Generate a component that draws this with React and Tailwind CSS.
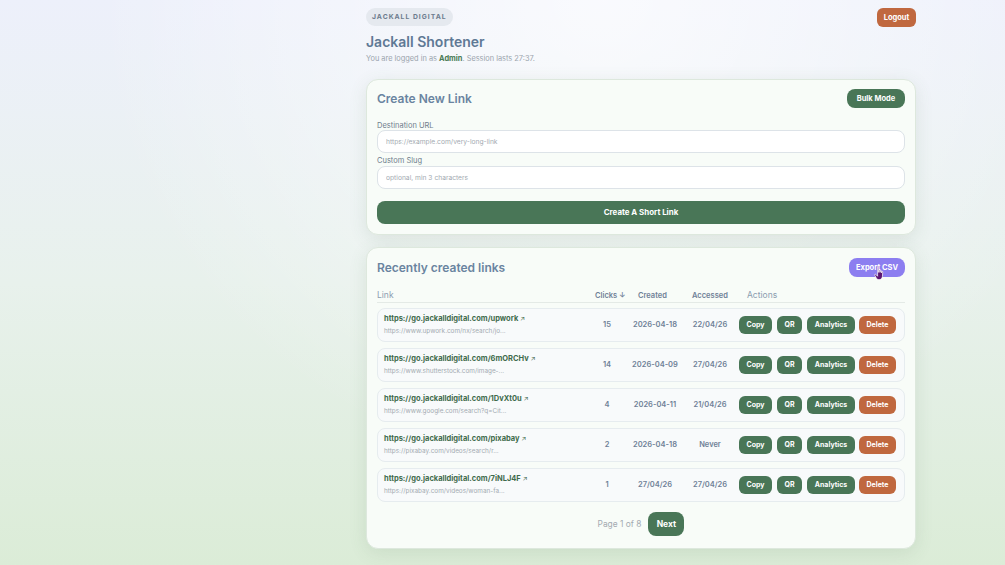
import React from 'react';

const links = [
    { short: 'https://go.jackalldigital.com/upwork', long: 'https://www.upwork.com/nx/search/jo...', clicks: 15, created: '2026-04-18', accessed: '22/04/26' },
    { short: 'https://go.jackalldigital.com/6mORCHv', long: 'https://www.shutterstock.com/image-...', clicks: 14, created: '2026-04-09', accessed: '27/04/26' },
    { short: 'https://go.jackalldigital.com/1DvXt0u', long: 'https://www.google.com/search?q=Cit...', clicks: 4, created: '2026-04-11', accessed: '21/04/26' },
    { short: 'https://go.jackalldigital.com/pixabay', long: 'https://pixabay.com/videos/search/r...', clicks: 2, created: '2026-04-18', accessed: 'Never' },
    { short: 'https://go.jackalldigital.com/7iNLJ4F', long: 'https://pixabay.com/videos/woman-fa...', clicks: 1, created: '27/04/26', accessed: '27/04/26' },
];

function LinkRow({ link }) {
    return (
        <div className="flex items-center h-[34px] rounded-lg border border-[#e6ecef] bg-[#f8fafb] pl-[6px]">
            <div className="w-[205px] flex flex-col gap-[3px] min-w-0">
                <div className="text-[7.5px] font-bold text-[#3f6b4c] leading-[10px] whitespace-nowrap">
                    {link.short} <span className="text-[6.5px] font-normal">↗</span>
                </div>
                <div className="text-[6.4px] text-[#a4abb2] leading-[9px] whitespace-nowrap">{link.long}</div>
            </div>
            <div className="w-[36px] text-center text-[7.5px] font-semibold text-[#6f8197]">{link.clicks}</div>
            <div className="w-[60px] text-center text-[7.5px] font-semibold text-[#6f8197]">{link.created}</div>
            <div className="w-[50px] text-center text-[7.5px] font-semibold text-[#6f8197]">{link.accessed}</div>
            <div className="flex items-center gap-[5px] pl-[4px]">
                <button className="h-[18px] w-[33px] rounded-md bg-[#497657] text-white text-[7px] font-bold">Copy</button>
                <button className="h-[18px] w-[25px] rounded-md bg-[#497657] text-white text-[7px] font-bold">QR</button>
                <button className="h-[18px] w-[48px] rounded-md bg-[#497657] text-white text-[7px] font-bold">Analytics</button>
                <button className="h-[18px] w-[37px] rounded-md bg-[#c0683f] text-white text-[7px] font-bold ml-[-1px]">Delete</button>
            </div>
        </div>
    );
}

// cursor de mão sobre o botão Export CSV
function HandCursor() {
    return (
        <svg width="12" height="16" viewBox="0 0 10 13" className="absolute left-[25px] top-[7px]">
            <path
                d="M3 1.2c0-.6.9-.6.9 0V6l.2-1.6c.1-.6.9-.5.9.1V6l.3-1.2c.1-.6.9-.5.9.1v1.5l.3-.9c.2-.5.9-.3.8.2L7 9.5C6.7 11 5.8 12 4.5 12H4c-1 0-1.7-.6-2.2-1.5L.6 8.3c-.3-.6.4-1.1.9-.6L3 9.2z"
                fill="#5b1470"
                stroke="#ffffff"
                strokeWidth="0.6"
            />
        </svg>
    );
}

export default function App() {
    return (
        <div className="min-h-[565px] w-full bg-gradient-to-b from-[#edf0fb] via-[#e8f1ec] to-[#dbecd7] font-['Inter',sans-serif] relative overflow-hidden">
            <div className="absolute inset-0 bg-[radial-gradient(ellipse_at_60%_0%,rgba(255,255,255,0.7),rgba(255,255,255,0)_60%)] pointer-events-none" />
            <div className="relative ml-[366px] w-[550px] pt-[8px] pb-[18px]">
                {/* Cabeçalho */}
                <div className="flex items-start justify-between">
                    <div className="flex flex-col">
                        <div className="flex w-fit items-center h-[18px] px-[6px] rounded-full bg-[#e5e9ef] text-[6.8px] font-bold tracking-[1px] text-[#6c7b8d]">
                            JACKALL DIGITAL
                        </div>
                        <h1 className="mt-[7px] text-[14px] font-semibold text-[#5f7995] leading-[18px]">Jackall Shortener</h1>
                        <p className="mt-[2px] text-[7.4px] text-[#9ba4ad] leading-[12px]">
                            You are logged in as <span className="font-bold text-[#4a7a55]">Admin</span>. Session lasts 27:37.
                        </p>
                    </div>
                    <button className="h-[19px] w-[39px] rounded-md bg-[#c0683f] text-white text-[7.5px] font-bold">Logout</button>
                </div>

                {/* Criar link */}
                <div className="mt-[14px] rounded-xl border border-[#dde8dd] bg-[#f8fcf8] shadow-[0_4px_18px_rgba(70,110,70,0.12)] px-[10px] pt-[9px] pb-[10px]">
                    <div className="flex items-center justify-between h-[19px]">
                        <h2 className="text-[12px] font-semibold text-[#6a84a0]">Create New Link</h2>
                        <button className="h-[19px] w-[58px] rounded-lg bg-[#497657] text-white text-[7.5px] font-bold">Bulk Mode</button>
                    </div>
                    <label className="block mt-[13px] text-[7.5px] text-[#6f7d8c] leading-[9px]">Destination URL</label>
                    <input
                        className="block w-full h-[23px] rounded-lg border border-[#dde3e8] bg-white px-[8px] text-[6.7px] outline-none placeholder:text-[#a3aab1]"
                        placeholder="https://example.com/very-long-link"
                    />
                    <label className="block mt-[3px] text-[7.5px] text-[#6f7d8c] leading-[10px]">Custom Slug</label>
                    <input
                        className="block w-full h-[23px] rounded-lg border border-[#dde3e8] bg-white px-[8px] text-[6.7px] outline-none placeholder:text-[#a3aab1]"
                        placeholder="optional, min 3 characters"
                    />
                    <button className="mt-[12px] w-full h-[23px] rounded-lg bg-[#497657] text-white text-[7.9px] font-bold">Create A Short Link</button>
                </div>

                {/* Links recentes */}
                <div className="mt-[12px] rounded-xl border border-[#dde8dd] bg-[#f8fcf8] shadow-[0_4px_18px_rgba(70,110,70,0.12)] px-[10px] pt-[10px] pb-[12px]">
                    <div className="flex items-center justify-between h-[19px]">
                        <h2 className="text-[12px] font-semibold text-[#6a84a0]">Recently created links</h2>
                        <div className="relative flex">
                            <button className="h-[19px] w-[56px] rounded-lg bg-[#8c7ef0] text-white text-[7.5px] font-bold">Export CSV</button>
                            <HandCursor />
                        </div>
                    </div>
                    <div className="mt-[13px] flex items-end h-[13px] pb-[1px] border-b border-[#e4eae6] text-[#6f8197]">
                        <div className="w-[218px] text-[8.5px] text-[#8c9cb0] leading-[11px]">Link</div>
                        <div className="w-[43px] text-[7.5px] font-semibold leading-[11px] whitespace-nowrap">Clicks ↓</div>
                        <div className="w-[54px] text-[7.5px] font-semibold leading-[11px]">Created</div>
                        <div className="w-[55px] text-[7.5px] font-semibold leading-[11px]">Accessed</div>
                        <div className="text-[8.5px] text-[#8c9cb0] leading-[11px]">Actions</div>
                    </div>
                    <div className="mt-[5px] flex flex-col gap-[6px]">
                        {links.map((l) => (
                            <LinkRow key={l.short} link={l} />
                        ))}
                    </div>
                    <div className="mt-[10px] flex items-center justify-center gap-[7px]">
                        <span className="text-[8.4px] text-[#a3aab1]">Page 1 of 8</span>
                        <button className="h-[24px] w-[36px] rounded-lg bg-[#497657] text-white text-[8.5px] font-bold">Next</button>
                    </div>
                </div>
            </div>
        </div>
    );
}
